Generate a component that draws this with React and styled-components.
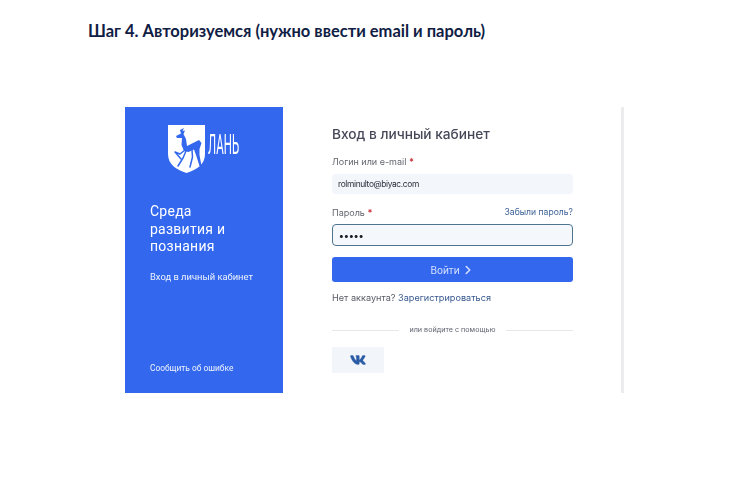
import React from "react";
import styled, { createGlobalStyle } from "styled-components";
import { FaVk } from "react-icons/fa";
import { LuChevronRight } from "react-icons/lu";

const GlobalStyle = createGlobalStyle`
  html, body {
    margin: 0;
    padding: 0;
    background: #ffffff;
    font-family: "Inter", "Roboto", "Liberation Sans", sans-serif;
  }
`;

const Page = styled.div`
  width: 750px;
  height: 500px;
  overflow: hidden;
  padding: 21px 0 0 88px;
  box-sizing: border-box;
`;

const StepTitle = styled.h1`
  margin: 0 0 66px;
  font-family: "Lato", "Open Sans", sans-serif;
  font-size: 16.5px;
  line-height: 20px;
  font-weight: 700;
  color: #0f2044;
`;

const Card = styled.div`
  display: flex;
  width: 500px;
  height: 286px;
  margin-left: 37px;
  filter: blur(0.45px);
`;

const Sidebar = styled.aside`
  display: flex;
  flex-direction: column;
  width: 158px;
  box-sizing: border-box;
  padding: 18px 0 19px 25px;
  background: #3267ee;
  color: #ffffff;
`;

const Logo = styled.div`
  display: flex;
  align-items: center;
  gap: 3px;
  margin: 0 0 30px 18px;
`;

const LogoWord = styled.span`
  display: inline-block;
  width: 30px;
  margin-bottom: 8px;
  font-family: "Roboto", sans-serif;
  font-size: 28px;
  line-height: 28px;
  font-weight: 400;
  transform: scaleX(0.41);
  transform-origin: left center;
  white-space: nowrap;
`;

const Slogan = styled.div`
  font-family: "Roboto", sans-serif;
  font-size: 14px;
  line-height: 17.5px;
  letter-spacing: 0.25px;
`;

const SideLink = styled.div`
  font-family: "Roboto", sans-serif;
  font-size: 9.4px;
  line-height: 12px;
  margin-top: ${(p) => p.$top || 0};
  opacity: 0.92;
`;

const SideFooter = styled(SideLink)`
  margin-top: auto;
  font-size: 8.4px;
`;

const FormArea = styled.main`
  flex: 1;
  display: flex;
  box-sizing: border-box;
  padding: 19px 0 0 49px;
  border-right: 3px solid #ececef;
  margin-right: 1px;
`;

const Form = styled.div`
  width: 241px;
  display: flex;
  flex-direction: column;
`;

const Heading = styled.h2`
  margin: 0 0 11px;
  font-size: 13.7px;
  line-height: 17px;
  font-weight: 500;
  color: #454858;
`;

const LabelRow = styled.div`
  display: flex;
  justify-content: space-between;
  align-items: center;
  height: 14px;
  margin-bottom: ${(p) => p.$gap || "6px"};
`;

const Label = styled.label`
  font-size: 9px;
  color: #62656f;
`;

const Star = styled.span`
  font-weight: 700;
  color: #c9323d;
`;

const ForgotLink = styled.a`
  font-size: 8.6px;
  color: #3a5f96;
`;

const Field = styled.div`
  display: flex;
  align-items: center;
  box-sizing: border-box;
  height: ${(p) => (p.$focused ? "22px" : "20px")};
  padding-left: 6px;
  margin-bottom: ${(p) => p.$gap || "0"};
  font-size: 8.4px;
  letter-spacing: -0.36px;
  color: #2a2d38;
  background: ${(p) => (p.$focused ? "#f4f8fd" : "#f3f6fb")};
  border: ${(p) => (p.$focused ? "1.5px solid #4f7490" : "none")};
  border-radius: ${(p) => (p.$focused ? "4px" : "3px")};
`;

const Dots = styled.span`
  font-size: 10px;
  font-weight: 700;
  letter-spacing: 0.2px;
  color: #20222c;
`;

const SubmitButton = styled.button`
  display: flex;
  align-items: center;
  justify-content: center;
  gap: 1px;
  height: 25px;
  margin: 11px 0 9px;
  padding: 0;
  border: none;
  border-radius: 3px;
  background: #3267ee;
  color: #d6e1fc;
  font-family: inherit;
  font-size: 10px;
`;

const SignupRow = styled.div`
  font-size: 9.15px;
  line-height: 14px;
  color: #585b66;
`;

const SignupLink = styled.a`
  color: #36578f;
`;

const Divider = styled.div`
  display: flex;
  align-items: center;
  gap: 10px;
  margin: 19px 0 11px;
  font-size: 7.2px;
  line-height: 12px;
  color: #5f6270;
  &::before,
  &::after {
    content: "";
    flex: 1;
    height: 1px;
    background: #e6e7ea;
  }
`;

const VkButton = styled.button`
  display: flex;
  align-items: center;
  justify-content: center;
  width: 52px;
  height: 26px;
  padding: 0 0 1px;
  border: none;
  background: #f2f5fa;
  color: #2a5ba5;
`;

function ShieldLogo() {
  return (
    <svg width="37" height="48" viewBox="0 0 37 48">
      <path d="M0 0H37V29C37 40 28 45 18.5 48C9 45 0 40 0 29Z" fill="#ffffff" />
      <path
        d="M8 11L13 8.5L12 5L16 3L14.5 6L17 5.5L15.5 9L18 14L19 21L31 15L33.5 18L31.5 24L31.5 30L33.5 41L31.5 41L28 30L26 24.5L20.5 27L16 26L13.5 20L14 13L9 13Z"
        fill="#3267ee"
      />
      <g fill="none" stroke="#3267ee" strokeLinecap="round" strokeLinejoin="round" strokeWidth="1.5">
        <path d="M24 25L24.5 32L22 42" />
        <path d="M17 25L12 29L7 27L13 34" />
        <path d="M18 26L15 33L10 41" />
      </g>
    </svg>
  );
}

export default function App() {
  return (
    <Page>
      <GlobalStyle />
      <StepTitle>Шаг 4. Авторизуемся (нужно ввести email и пароль)</StepTitle>
      <Card>
        <Sidebar>
          <Logo>
            <ShieldLogo />
            <LogoWord>ЛАНЬ</LogoWord>
          </Logo>
          <Slogan>
            Среда
            <br />
            развития и
            <br />
            познания
          </Slogan>
          <SideLink $top="15px">Вход в личный кабинет</SideLink>
          <SideFooter>Сообщить об ошибке</SideFooter>
        </Sidebar>
        <FormArea>
          <Form>
            <Heading>Вход в личный кабинет</Heading>
            <LabelRow>
              <Label>
                Логин или e-mail <Star>*</Star>
              </Label>
            </LabelRow>
            <Field $gap="11px">rolminulto@biyac.com</Field>
            <LabelRow $gap="5px">
              <Label>
                Пароль <Star>*</Star>
              </Label>
              <ForgotLink>Забыли пароль?</ForgotLink>
            </LabelRow>
            <Field $focused>
              <Dots>•••••</Dots>
            </Field>
            <SubmitButton>
              Войти <LuChevronRight size={14} strokeWidth={2.6} />
            </SubmitButton>
            <SignupRow>
              Нет аккаунта? <SignupLink>Зарегистрироваться</SignupLink>
            </SignupRow>
            <Divider>или войдите с помощью</Divider>
            <VkButton>
              <FaVk size={16} stroke="currentColor" strokeWidth={14} />
            </VkButton>
          </Form>
        </FormArea>
      </Card>
    </Page>
  );
}
